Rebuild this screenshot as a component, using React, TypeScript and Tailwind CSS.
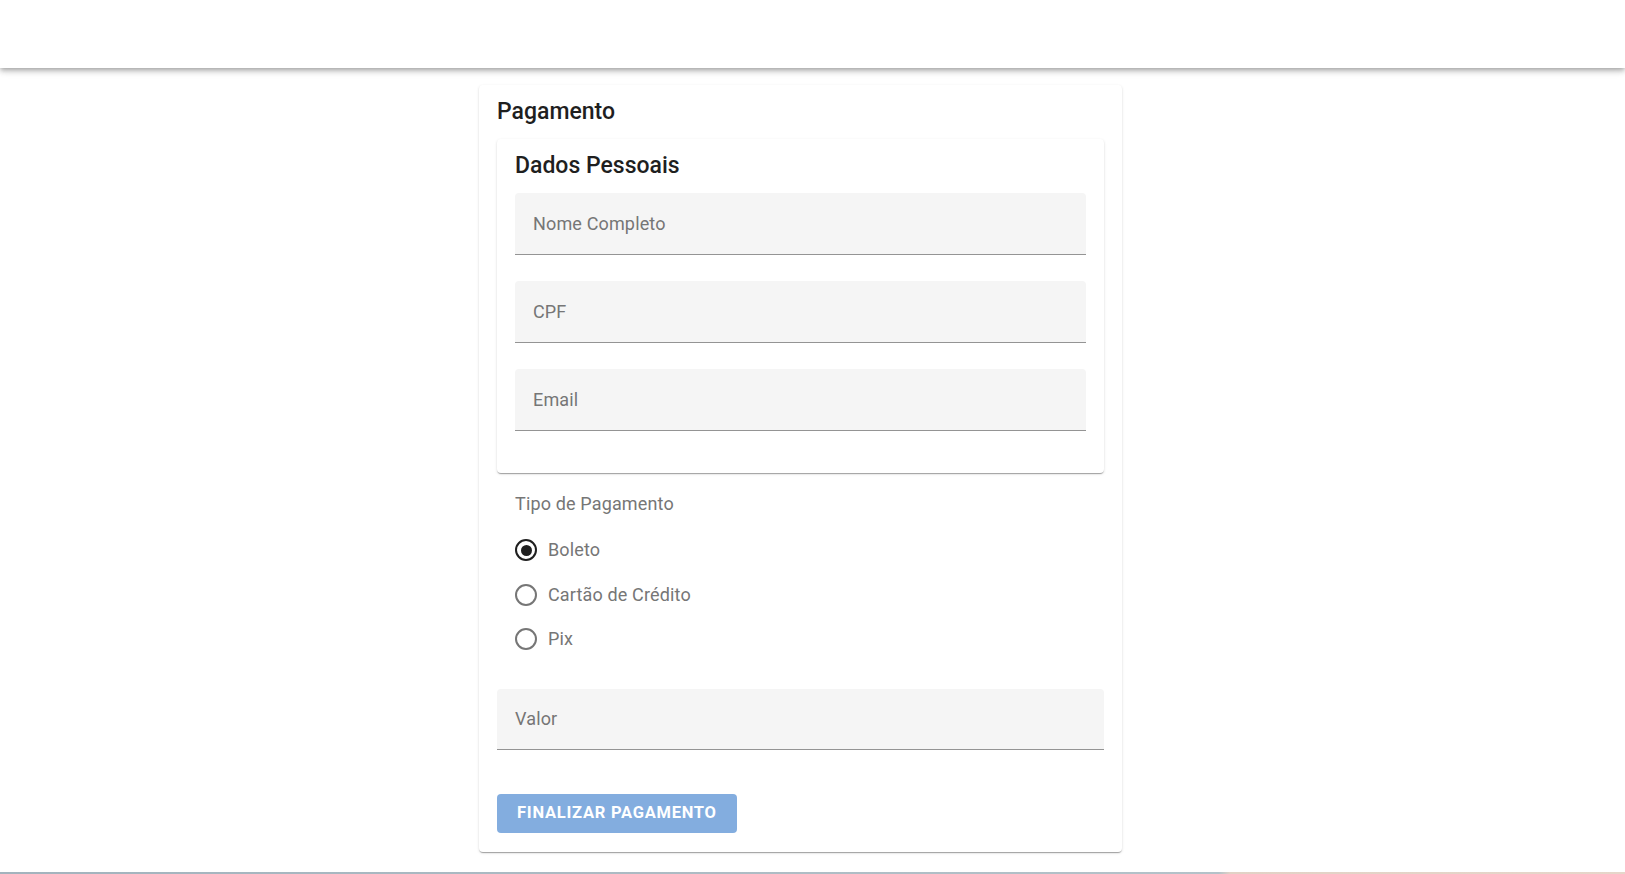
import { useState } from "react";

const fields = ["Nome Completo", "CPF", "Email"];
const tipos = ["Boleto", "Cartão de Crédito", "Pix"];

const FilledInput = ({ label }: { label: string }) => {
  return (
    <div className="flex h-[62px] items-center rounded-t-[4px] border-b border-[#949494] bg-[#f5f5f5] pl-[18px]">
      <span className="text-[18px] leading-6 tracking-[0.15px] text-[#767676]">{label}</span>
    </div>
  );
};

const RadioRow = ({
  label,
  checked,
  onClick,
}: {
  label: string;
  checked: boolean;
  onClick: () => void;
}) => {
  return (
    <label
      className="flex h-[44.5px] cursor-pointer items-center gap-[11px]"
      onClick={onClick}
    >
      <span
        className={`flex h-[22px] w-[22px] items-center justify-center rounded-full border-2 ${
          checked ? "border-[#1f1f1f]" : "border-[#767676]"
        }`}
      >
        {checked && <span className="h-[11px] w-[11px] rounded-full bg-[#1f1f1f]" />}
      </span>
      <span className="text-[18px] leading-6 tracking-[0.15px] text-[#767676]">{label}</span>
    </label>
  );
};

export default function App() {
  const [tipo, setTipo] = useState("Boleto");

  return (
    <div className="flex h-screen flex-col overflow-hidden bg-white font-['Roboto','Liberation_Sans',sans-serif]">
      <header className="h-[68px] shrink-0 bg-white shadow-[0_2px_4px_-1px_rgba(0,0,0,0.2),0_4px_5px_0_rgba(0,0,0,0.14),0_1px_10px_0_rgba(0,0,0,0.12)]" />

      <main className="flex-1">
        <div className="ml-[479px] mt-[17px] w-[643px] rounded-[4px] bg-white px-[18px] pb-[19px] pt-[9px] shadow-[0_2px_1px_-1px_rgba(0,0,0,0.2),0_1px_1px_0_rgba(0,0,0,0.14),0_1px_3px_0_rgba(0,0,0,0.12)]">
          <h1 className="text-[23px] font-medium leading-[35px] text-[#1f1f1f]">
            Pagamento
          </h1>

          <section className="mt-[10px] rounded-[4px] bg-white px-[18px] pb-[42px] pt-[11px] shadow-[0_2px_1px_-1px_rgba(0,0,0,0.2),0_1px_1px_0_rgba(0,0,0,0.14),0_1px_3px_0_rgba(0,0,0,0.12)]">
            <h2 className="text-[23px] font-medium leading-[32px] text-[#1f1f1f]">
              Dados Pessoais
            </h2>
            <div className="mt-[11px] flex flex-col gap-[26px]">
              {fields.map((f) => (
                <FilledInput key={f} label={f} />
              ))}
            </div>
          </section>

          <div className="px-[18px]">
            <p className="mt-[19px] text-[18px] leading-6 tracking-[0.15px] text-[#767676]">
              Tipo de Pagamento
            </p>
            <div className="mt-[12px] flex flex-col">
              {tipos.map((t) => (
                <RadioRow
                  key={t}
                  label={t}
                  checked={tipo === t}
                  onClick={() => setTipo(t)}
                />
              ))}
            </div>
          </div>

          <div className="mt-[27px]">
            <div className="flex h-[61px] items-center rounded-t-[4px] border-b border-[#949494] bg-[#f5f5f5] pl-[18px]">
              <span className="text-[18px] leading-6 tracking-[0.15px] text-[#767676]">Valor</span>
            </div>
          </div>

          <button className="mt-[44px] flex h-[39px] items-center rounded-[4px] bg-[#83addf] px-[20px] text-[16.5px] font-bold uppercase tracking-[0.75px] text-white">
            Finalizar Pagamento
          </button>
        </div>
      </main>

      <div className="h-[2px] shrink-0 bg-[linear-gradient(to_right,#a3b3bd_0%,#b4c2c9_75%,#e2d2c6_75.7%,#e6d6ca_100%)]" />
    </div>
  );
}
